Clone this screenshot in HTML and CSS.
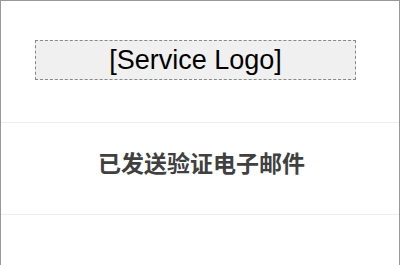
FILE: index.html
```html
<!DOCTYPE html>
<html lang="zh-CN">
<head>
  <meta charset="UTF-8" />
  <meta name="viewport" content="width=device-width, initial-scale=1.0" />
  <title>已发送验证电子邮件</title>
  <link rel="stylesheet" href="styles.css">
</head>
<body>
  <div class="card">
    <!-- Logo -->
    <header class="brand">
      <div class="logo">[Service Logo]</div>
    </header>

    <section class="notice">
      <h1>已发送验证电子邮件</h1>
    </section>

    <section class="rest"></section>
  </div>
</body>
</html>
```

FILE: styles.css
```css
body, h1, div, section, header {
  margin: 0;
  padding: 0;
}

body {
  background-color: #fff;
  font-family: "Liberation Sans", Arial, "Noto Sans CJK SC", sans-serif;
  color: #333;
  overflow: hidden;
}

.card {
  width: 398px;
  height: 264px;
  border: 1px solid #999;
  border-bottom: none;
}

.brand {
  padding: 39px 0 42px 34px;
  border-bottom: 1px solid #eee;
}

.logo {
  width: 319px;
  height: 38px;
  line-height: 38px;
  border: 1px dashed #888;
  background-color: #f0f0f0;
  color: #000;
  font-size: 27px;
  text-align: center;
}

.notice {
  box-sizing: border-box;
  height: 92px;
  padding-top: 28px;
  text-align: center;
  border-bottom: 1px solid #eee;
}

.notice h1 {
  font-family: "Noto Sans CJK SC", sans-serif;
  font-size: 23px;
  line-height: 23px;
  font-weight: bold;
  color: #404040;
  padding-left: 3px;
}
```
